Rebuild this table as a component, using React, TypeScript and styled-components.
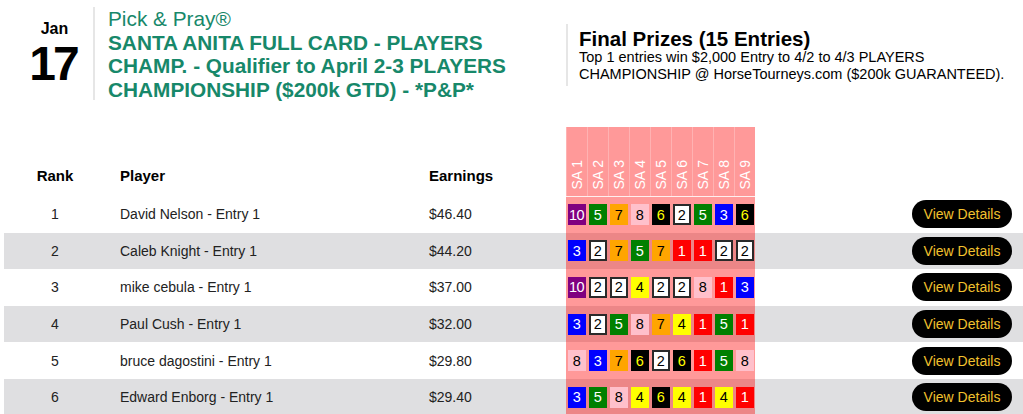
import React from 'react';
import styled, { createGlobalStyle } from 'styled-components';

const GlobalStyle = createGlobalStyle`
  body {
    margin: 0;
    background: #fff;
    font-family: "Liberation Sans", Arial, sans-serif;
    color: #000;
  }
`;

type ChipStyle = { bg: string; fg: string; border?: string };

const chipColors: Record<number, ChipStyle> = {
  1: { bg: '#ff0000', fg: '#fff' },
  2: { bg: '#fff', fg: '#000', border: '#2a2a2a' },
  3: { bg: '#0000ff', fg: '#fff' },
  4: { bg: '#ffff00', fg: '#000' },
  5: { bg: '#008000', fg: '#fff' },
  6: { bg: '#000', fg: '#ffff00' },
  7: { bg: '#ffa500', fg: '#000' },
  8: { bg: '#ffc0cb', fg: '#000' },
  10: { bg: '#800080', fg: '#fff' },
};

const races = ['SA 1', 'SA 2', 'SA 3', 'SA 4', 'SA 5', 'SA 6', 'SA 7', 'SA 8', 'SA 9'];

const players = [
  { rank: 1, name: 'David Nelson - Entry 1', earnings: '$46.40', picks: [10, 5, 7, 8, 6, 2, 5, 3, 6] },
  { rank: 2, name: 'Caleb Knight - Entry 1', earnings: '$44.20', picks: [3, 2, 7, 5, 7, 1, 1, 2, 2] },
  { rank: 3, name: 'mike cebula - Entry 1', earnings: '$37.00', picks: [10, 2, 2, 4, 2, 2, 8, 1, 3] },
  { rank: 4, name: 'Paul Cush - Entry 1', earnings: '$32.00', picks: [3, 2, 5, 8, 7, 4, 1, 5, 1] },
  { rank: 5, name: 'bruce dagostini - Entry 1', earnings: '$29.80', picks: [8, 3, 7, 6, 2, 6, 1, 5, 8] },
  { rank: 6, name: 'Edward Enborg - Entry 1', earnings: '$29.40', picks: [3, 5, 8, 4, 6, 4, 1, 4, 1] },
];

const App: React.FC = () => {
  return (
    <>
      <GlobalStyle />
      <Header>
        <DateBlock>
          <Month>Jan</Month>
          <Day>17</Day>
        </DateBlock>
        <TitleBlock>
          <Brand>Pick &amp; Pray®</Brand>
          <EventName>
            SANTA ANITA FULL CARD - PLAYERS CHAMP. - Qualifier to April 2-3 PLAYERS CHAMPIONSHIP ($200k GTD) - *P&amp;P*
          </EventName>
        </TitleBlock>
        <PrizeBlock>
          <PrizeTitle>Final Prizes (15 Entries)</PrizeTitle>
          <PrizeText>
            Top 1 entries win $2,000 Entry to 4/2 to 4/3 PLAYERS CHAMPIONSHIP @ HorseTourneys.com ($200k GUARANTEED).
          </PrizeText>
        </PrizeBlock>
      </Header>

      <Board>
        <colgroup>
          <col style={{ width: 102 }} />
          <col style={{ width: 309 }} />
          <col style={{ width: 151 }} />
          {races.map((r) => (
            <col key={r} style={{ width: 21 }} />
          ))}
          <col />
        </colgroup>
        <thead>
          <HeadRow>
            <HeadCell $align="center">Rank</HeadCell>
            <HeadCell>Player</HeadCell>
            <HeadCell>Earnings</HeadCell>
            {races.map((r) => (
              <RaceHead key={r}>
                <span>{r}</span>
              </RaceHead>
            ))}
            <HeadCell />
          </HeadRow>
        </thead>
        <tbody>
          {players.map((p) => (
            <Row key={p.rank} $striped={p.rank % 2 === 0}>
              <Cell $align="center">{p.rank}</Cell>
              <Cell>{p.name}</Cell>
              <Cell>{p.earnings}</Cell>
              {p.picks.map((n, i) => (
                <PickCell key={i}>
                  <Chip $c={chipColors[n]}>{n}</Chip>
                </PickCell>
              ))}
              <ActionCell>
                <DetailsButton>View Details</DetailsButton>
              </ActionCell>
            </Row>
          ))}
        </tbody>
      </Board>
    </>
  );
};

export default App;

const Header = styled.div`
  display: flex;
  align-items: flex-start;
  padding-top: 7px;
  height: 95px;
`;

const DateBlock = styled.div`
  box-sizing: border-box;
  flex: 0 0 95px;
  height: 93px;
  padding-left: 16px;
  border-right: 2px solid #e6e6e6;
  display: flex;
  flex-direction: column;
  align-items: center;
`;

const Month = styled.div`
  margin-top: 13px;
  font-size: 16px;
  font-weight: bold;
  line-height: 18px;
`;

const Day = styled.div`
  margin-top: 2px;
  font-size: 48px;
  font-weight: bold;
  line-height: 48px;
  letter-spacing: -3px;
  padding-right: 3px;
`;

const TitleBlock = styled.div`
  box-sizing: border-box;
  flex: 0 0 471px;
  padding: 0 28px 0 13px;
  color: #17886a;
  font-size: 20.8px;
  line-height: 23.7px;
`;

const Brand = styled.div``;

const EventName = styled.div`
  font-weight: bold;
`;

const PrizeBlock = styled.div`
  flex: 1 1 auto;
  min-width: 0;
  margin-top: 17px;
  height: 58px;
  padding: 4px 12px 0 11px;
  border-left: 2px solid #e6e6e6;
`;

const PrizeTitle = styled.div`
  font-size: 20.5px;
  font-weight: bold;
  line-height: 21px;
`;

const PrizeText = styled.div`
  font-size: 14.5px;
  line-height: 17px;
`;

const Board = styled.table`
  margin: 25px 0 0 4px;
  width: calc(100% - 4px);
  table-layout: fixed;
  border-collapse: collapse;
  color: #222;
`;

const HeadRow = styled.tr`
  height: 69px;
`;

const HeadCell = styled.th<{ $align?: string }>`
  padding: 0 0 12px ${(p) => (p.$align === 'center' ? '0' : '14px')};
  vertical-align: bottom;
  text-align: ${(p) => p.$align || 'left'};
  font-size: 15px;
  font-weight: bold;
  color: #000;
`;

const RaceHead = styled.th`
  padding: 0 0 3px;
  vertical-align: bottom;
  background: rgba(255, 0, 0, 0.4);
  border-left: 1px solid rgba(255, 255, 255, 0.25);
  border-bottom: 1px solid rgba(255, 255, 255, 0.6);
  color: #fff;
  font-size: 14px;
  font-weight: normal;
  line-height: 16px;

  span {
    display: inline-block;
    writing-mode: vertical-rl;
    transform: rotate(180deg);
    white-space: nowrap;
  }
`;

const Row = styled.tr<{ $striped: boolean }>`
  height: 36.6px;
  background: ${(p) => (p.$striped ? '#dfdfe1' : '#fff')};
`;

const Cell = styled.td<{ $align?: string }>`
  padding: 0 0 0 ${(p) => (p.$align === 'center' ? '0' : '14px')};
  text-align: ${(p) => p.$align || 'left'};
  vertical-align: middle;
  font-size: 14px;
`;

const PickCell = styled.td`
  padding: 0;
  background: rgba(255, 0, 0, 0.4);
  vertical-align: middle;
`;

const Chip = styled.div<{ $c: ChipStyle }>`
  box-sizing: border-box;
  width: 18px;
  height: 21px;
  margin: 0 auto;
  display: flex;
  align-items: center;
  justify-content: center;
  background: ${(p) => p.$c.bg};
  color: ${(p) => p.$c.fg};
  border: 2px solid ${(p) => p.$c.border || p.$c.bg};
  font-size: 14.5px;
  letter-spacing: -0.5px;
`;

const ActionCell = styled.td`
  padding: 0 11px 0 0;
  text-align: right;
  vertical-align: middle;
`;

const DetailsButton = styled.button`
  width: 100px;
  height: 28px;
  border: none;
  border-radius: 14px;
  background: #000;
  color: #f2c12e;
  font-family: "Liberation Sans", Arial, sans-serif;
  font-size: 14px;
  cursor: pointer;
`;
